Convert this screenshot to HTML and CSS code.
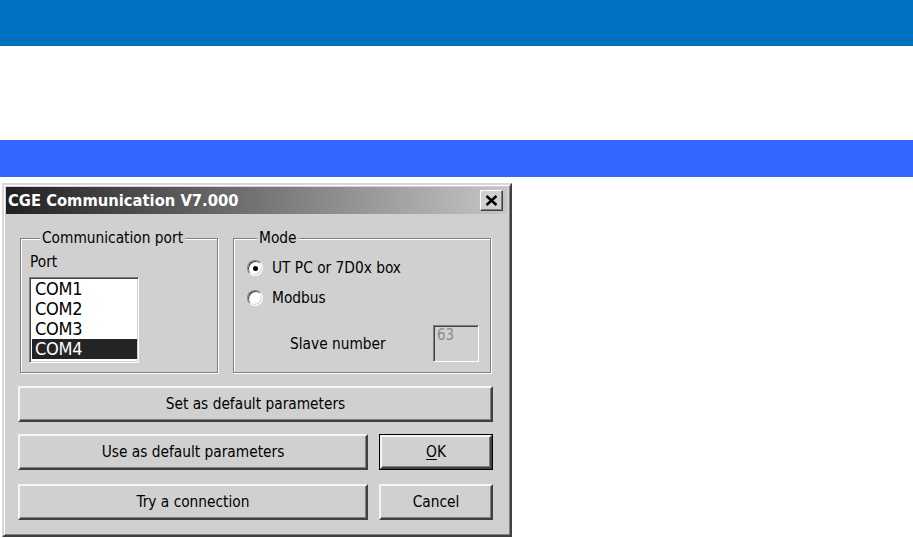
FILE: index.html
```html
<!DOCTYPE html>
<html>
<head>
<meta charset="utf-8">
<title>CGE Communication</title>
<link rel="stylesheet" href="styles.css">
</head>
<body>
<div class="topbar"></div>
<div class="spacer"></div>
<div class="subbar"></div>
<div class="dialog">
  <div class="titlebar">
    <span class="title">CGE Communication V7.000</span>
    <span class="close"><svg width="13" height="11" viewBox="0 0 13 11"><path d="M1.5 1 L11.5 10 M11.5 1 L1.5 10" stroke="#000" stroke-width="2.4" fill="none"/></svg></span>
  </div>
  <div class="body">
    <div class="groups">
      <fieldset class="group port-group">
        <legend>Communication port</legend>
        <div class="label">Port</div>
        <div class="listbox">
          <div class="item">COM1</div>
          <div class="item">COM2</div>
          <div class="item">COM3</div>
          <div class="item selected">COM4</div>
        </div>
      </fieldset>
      <fieldset class="group mode-group">
        <legend>Mode</legend>
        <div class="radio-row first"><span class="radio checked"></span><span>UT PC or 7D0x box</span></div>
        <div class="radio-row"><span class="radio"></span><span>Modbus</span></div>
        <div class="slave-row"><span class="slave-label">Slave number</span><span class="textbox">63</span></div>
      </fieldset>
    </div>
    <div class="btn wide set-btn">Set as default parameters</div>
    <div class="btn-row first-row">
      <div class="btn left-btn">Use as default parameters</div>
      <div class="btn right-btn default"><span class="inner"><u>O</u>K</span></div>
    </div>
    <div class="btn-row second-row">
      <div class="btn left-btn">Try a connection</div>
      <div class="btn right-btn">Cancel</div>
    </div>
  </div>
</div>
</body>
</html>
```

FILE: styles.css
```css
* { box-sizing: border-box; }
html, body { margin: 0; padding: 0; background: #fff; }
body {
  width: 913px;
  height: 538px;
  overflow: hidden;
  font-family: "DejaVu Sans Condensed", "DejaVu Sans", sans-serif;
  font-size: 15.3px;
  color: #000;
}
.topbar { height: 46px; background: #0070c0; }
.spacer { height: 94px; }
.subbar { height: 37px; background: #3366ff; }

.dialog {
  margin: 6px 0 0 2px;
  width: 510px;
  background: #d0d0d0;
  border: 2px solid;
  border-color: #d8d8d8 #404040 #404040 #d8d8d8;
  box-shadow: inset 1px 1px 0 #fff, inset -1px -1px 0 #808080;
  padding: 2px 3px 2px 2px;
}
.titlebar {
  height: 27px;
  display: flex;
  align-items: center;
  justify-content: space-between;
  padding: 0 4px 0 2px;
  background: linear-gradient(to right, #202020 0%, #4a4a4a 25%, #c6c6c6 100%);
}
.title {
  color: #fff;
  font-weight: bold;
  font-size: 16.4px;
  white-space: nowrap;
}
.close {
  width: 23px;
  height: 21px;
  display: flex;
  align-items: center;
  justify-content: center;
  background: #d0d0d0;
  border: 1px solid;
  border-color: #fff #404040 #404040 #fff;
  box-shadow: inset -1px -1px 0 #808080;
}

.body { padding: 0 14px 13px 12px; }
.groups {
  display: flex;
  gap: 15px;
  margin: 15px 0 0 2px;
}
.group {
  margin: 0;
  min-width: 0;
  border: 1px solid #808080;
  box-shadow: 1px 1px 0 #fff, inset 1px 1px 0 #fff;
}
.group legend {
  margin-left: 10px;
  padding: 0 2px;
  line-height: 18px;
  background: #d0d0d0;
}
.port-group { width: 198px; padding: 0 8px 0 9px; }
.mode-group { width: 258px; padding: 0 11px 10px 13px; }

.label { margin-top: 6px; line-height: 18px; }
.listbox {
  margin: 6px 0 0 -1px;
  width: 110px;
  height: 86px;
  background: #fff;
  border: 1px solid;
  border-color: #808080 #fff #fff #808080;
  box-shadow: inset 1px 1px 0 #404040, inset -1px -1px 0 #d0d0d0;
  padding: 1px 1px 0 2px;
}
.item {
  height: 20px;
  line-height: 20px;
  font-size: 18px;
  padding-left: 3px;
  letter-spacing: -0.3px;
}
.item.selected { background: #242424; color: #fff; }

.radio-row {
  height: 30px;
  display: flex;
  align-items: center;
  gap: 9px;
}
.radio-row.first { margin-top: 6px; }
.radio {
  width: 16px;
  height: 16px;
  border-radius: 50%;
  background: #fff;
  border: 1px solid;
  border-color: #808080 #fff #fff #808080;
  box-shadow: inset 1px 1px 0 #404040, inset -1px -1px 0 #d0d0d0;
  display: flex;
  align-items: center;
  justify-content: center;
}
.radio.checked::after {
  content: "";
  width: 5px;
  height: 5px;
  border-radius: 50%;
  background: #000;
}
.slave-row {
  margin-top: 12px;
  display: flex;
  align-items: center;
}
.slave-label { margin-left: 43px; }
.textbox {
  margin-left: auto;
  width: 46px;
  height: 37px;
  border: 1px solid;
  border-color: #808080 #fff #fff #808080;
  box-shadow: inset 1px 1px 0 #404040, inset -1px -1px 0 #d0d0d0;
  color: #8a8a8a;
  padding: 1px 3px;
  line-height: 16px;
  font-size: 15px;
}

.btn {
  height: 36px;
  display: flex;
  align-items: center;
  justify-content: center;
  background: #d0d0d0;
  border: 2px solid;
  border-color: #f4f4f4 #404040 #404040 #f4f4f4;
  box-shadow: inset -1px -1px 0 #808080;
  white-space: nowrap;
}
.set-btn { margin-top: 13px; }
.btn-row { display: flex; gap: 11px; }
.first-row { margin-top: 12px; }
.second-row { margin-top: 14px; }
.left-btn { width: 350px; }
.right-btn { width: 114px; }
.btn.default {
  border: 1px solid #000;
  box-shadow: none;
  padding: 0;
  align-items: stretch;
  justify-content: stretch;
}
.btn.default .inner {
  flex: 1;
  display: flex;
  align-items: center;
  justify-content: center;
  border: 2px solid;
  border-color: #f4f4f4 #404040 #404040 #f4f4f4;
  box-shadow: inset -1px -1px 0 #808080;
}
u { text-decoration-thickness: 1px; text-underline-offset: 2px; }
```
